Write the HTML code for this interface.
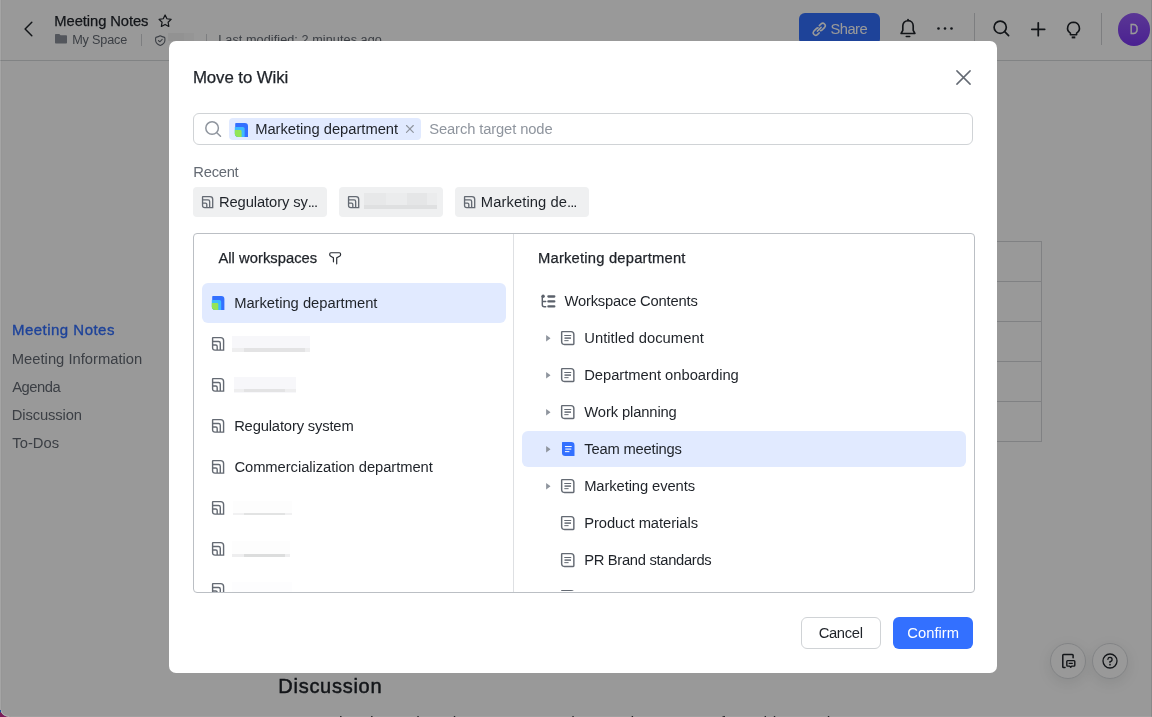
<!DOCTYPE html>
<html lang="en">
<head>
<meta charset="utf-8">
<title>Move to Wiki</title>
<style>
*{box-sizing:border-box;margin:0;padding:0}
html,body{width:1152px;height:717px;overflow:hidden;background:#fff}
body{font-family:"Liberation Sans",sans-serif;font-size:14px;color:#1f2329;position:relative}
.t{position:absolute;white-space:nowrap}
svg{position:absolute;overflow:visible}
#page,#mask,#top,#frame{position:absolute;left:0;top:0;width:1152px;height:717px;overflow:hidden}
#page,#top{will-change:transform}
#page{background:#fff}
#mask{background:rgba(0,0,0,.4)}
#hdrline{position:absolute;left:0;top:60px;width:1152px;height:1px;background:#d8dadd}
.vsep{position:absolute;width:1px;background:#d0d3d6}
#share{position:absolute;left:799px;top:13px;width:81px;height:32px;border-radius:6px;background:#3370ff}
#avatar{position:absolute;left:1117.500px;top:13px;width:32.500px;height:32.500px;border-radius:50%;background:linear-gradient(#975cf8,#7c37f2)}
.tbl{position:absolute;background:#d5d7da}
.fab{position:absolute;width:36px;height:36px;border-radius:50%;background:#fff;border:1px solid #dadcdf;box-shadow:0 4px 14px rgba(31,35,41,.10)}
#modal{position:absolute;left:169px;top:41px;width:828px;height:632px;background:#fff;border-radius:7px}
#search{position:absolute;left:193px;top:113px;width:780px;height:32px;border:1px solid #d0d3d6;border-radius:6px}
#tag{position:absolute;left:229px;top:118px;width:192px;height:22px;border-radius:4px;background:#e1eaff}
.chip{position:absolute;top:187px;height:29.700px;border-radius:4px;background:#eff0f1}
.bl{position:absolute}
.clip{position:absolute;overflow:hidden}
#panel{position:absolute;left:193px;top:233px;width:782px;height:360px;border:1px solid #bbbfc4;border-radius:4px}
#divider{position:absolute;left:319px;top:0;width:1px;height:358px;background:#dee0e3}
.sel{position:absolute;background:#e1eaff;border-radius:6px}
.btn{position:absolute;top:617px;width:80px;height:32px;border-radius:6px}
#b-cancel{left:801px;border:1px solid #d0d3d6;background:#fff}
#b-confirm{left:893px;background:#3370ff}
.edge{position:absolute}
</style>
</head>
<body>
<div id="page">
<svg style="left:22px;top:20px" width="12" height="18" viewBox="0 0 12 18"><path d="M9.800 2.300 L3.100 9 L9.800 15.700" fill="none" stroke="#1f2329" stroke-width="1.500" stroke-linecap="round" stroke-linejoin="round"/></svg>
<div class="t" id="h-title" style="left:54.37px;top:11.14px;font-size:14.75px;line-height:20px;height:20px;letter-spacing:-0.082px;color:#1f2329;-webkit-text-stroke:0.25px #1f2329">Meeting Notes</div>
<svg style="left:157.900px;top:14.400px" width="14.200" height="13.700" viewBox="0 0 13.500 13"><path d="M6.750 .9 L8.500 4.500 L12.500 5.050 L9.600 7.850 L10.300 11.800 L6.750 9.900 L3.200 11.800 L3.900 7.850 L1 5.050 L5 4.500 Z" fill="none" stroke="#1f2329" stroke-width="1.150" stroke-linejoin="round"/></svg>
<svg style="left:55px;top:33.600px" width="12" height="9.600" viewBox="0 0 12 9.600"><path d="M0 .8 Q0 0 .8 0 H4.300 L5.500 1.300 H11.200 Q12 1.300 12 2.100 V8.800 Q12 9.600 11.200 9.600 H.8 Q0 9.600 0 8.800 Z" fill="#8a9099"/></svg>
<div class="t" id="h-space" style="left:72.23px;top:29.87px;font-size:12.65px;line-height:20px;height:20px;letter-spacing:-0.173px;color:#646a73">My Space</div>
<div class="vsep" style="left:141px;top:34px;height:12px"></div>
<svg style="left:155px;top:34.800px" width="10.500" height="11" viewBox="0 0 10.500 11"><path d="M5.250 .75 Q7.300 1.900 8.900 2.100 Q9.900 2.250 9.900 3.250 V5.300 Q9.900 8.800 5.250 10.500 Q.6 8.800 .6 5.300 V3.250 Q.6 2.250 1.600 2.100 Q3.200 1.900 5.250 .75 Z" fill="none" stroke="#646a73" stroke-width="1.100" stroke-linejoin="round"/><path d="M3.400 5.500 L4.800 6.800 L7.200 4.300" fill="none" stroke="#646a73" stroke-width="1.050" stroke-linecap="round" stroke-linejoin="round"/></svg>
<div class="vsep" style="left:206px;top:34px;height:12px"></div>
<div class="t" id="h-mod" style="left:218.19px;top:29.87px;font-size:12.65px;line-height:20px;height:20px;letter-spacing:0.076px;color:#646a73">Last modified: 2 minutes ago</div>
<div id="hdrline"></div>
<div id="share"></div>
<svg style="left:811.300px;top:21px" width="16.500" height="16.500" viewBox="0 0 14.500 14.500"><g fill="none" stroke="#fff" stroke-width="1.350" stroke-linecap="round"><path d="M5.600 8.900 L8.900 5.600"/><path d="M7.300 4.100 L8.900 2.500 A2.200 2.200 0 0 1 12 5.600 L9.800 7.800 A2.200 2.200 0 0 1 8.300 8.450"/><path d="M7.200 10.400 L5.600 12 A2.200 2.200 0 0 1 2.500 8.900 L4.700 6.700 A2.200 2.200 0 0 1 6.200 6.050"/></g></svg>
<div class="t" id="h-share" style="left:830.51px;top:18.89px;font-size:14.75px;line-height:20px;height:20px;letter-spacing:-0.562px;color:#fff">Share</div>
<svg style="left:899px;top:19.300px" width="18" height="19" viewBox="0 0 18 19"><path d="M9 1.700 C5.600 1.700 3.800 4.200 3.800 7 V11.300 L2.100 14.500 H15.900 L14.200 11.300 V7 C14.200 4.200 12.400 1.700 9 1.700 Z" fill="none" stroke="#1f2329" stroke-width="1.650" stroke-linejoin="round"/><path d="M9 .5 V1.500" stroke="#1f2329" stroke-width="1.600" stroke-linecap="round"/><path d="M7.300 17.500 H10.700" stroke="#1f2329" stroke-width="1.650" stroke-linecap="round"/></svg>
<svg style="left:937px;top:26.900px" width="16" height="3" viewBox="0 0 16 3"><circle cx="1.500" cy="1.500" r="1.300" fill="#1f2329"/><circle cx="8" cy="1.500" r="1.300" fill="#1f2329"/><circle cx="14.500" cy="1.500" r="1.300" fill="#1f2329"/></svg>
<div class="vsep" style="left:974px;top:13px;height:32px"></div>
<svg style="left:993.200px;top:20.300px" width="17" height="17" viewBox="0 0 17 17"><circle cx="7.200" cy="7.200" r="6.100" fill="none" stroke="#1f2329" stroke-width="1.700"/><path d="M11.700 11.700 L15.600 15.600" stroke="#1f2329" stroke-width="1.700" stroke-linecap="round"/></svg>
<svg style="left:1031px;top:22px" width="14.500" height="14.500" viewBox="0 0 14.500 14.500"><path d="M7.250 .8 V13.700 M.8 7.250 H13.700" stroke="#1f2329" stroke-width="1.750" stroke-linecap="round"/></svg>
<svg style="left:1066.200px;top:20.500px" width="15" height="18" viewBox="0 0 15 18"><path d="M7.500 1.200 A5.900 5.900 0 0 1 10.600 12.100 V13.700 H4.400 V12.100 A5.900 5.900 0 0 1 7.500 1.200 Z" fill="none" stroke="#1f2329" stroke-width="1.600" stroke-linejoin="round"/><path d="M5.700 16.400 H9.300" stroke="#1f2329" stroke-width="2" stroke-linecap="butt"/></svg>
<div class="vsep" style="left:1101px;top:13px;height:32px"></div>
<div id="avatar"></div>
<div class="t" id="h-av" style="left:1128.600px;top:18.600px;font-size:14px;line-height:20px;color:#fff;-webkit-text-stroke:.3px #fff;transform:scaleX(.84);transform-origin:50% 50%">D</div>
<div class="t" id="n0" style="left:11.91px;top:320.30px;font-size:15.0px;line-height:20px;height:20px;letter-spacing:0.485px;color:#3370ff;-webkit-text-stroke:.35px #3370ff">Meeting Notes</div>
<div class="t" id="n1" style="left:11.82px;top:348.89px;font-size:14.75px;line-height:20px;height:20px;letter-spacing:0.001px;color:#646a73">Meeting Information</div>
<div class="t" id="n2" style="left:12.28px;top:376.89px;font-size:14.75px;line-height:20px;height:20px;letter-spacing:-0.502px;color:#646a73">Agenda</div>
<div class="t" id="n3" style="left:11.82px;top:404.89px;font-size:14.75px;line-height:20px;height:20px;letter-spacing:-0.119px;color:#646a73">Discussion</div>
<div class="t" id="n4" style="left:12.28px;top:433.29px;font-size:14.75px;line-height:20px;height:20px;letter-spacing:0.035px;color:#646a73">To-Dos</div>
<div class="tbl" style="left:900px;top:241px;width:142px;height:1px"></div>
<div class="tbl" style="left:900px;top:281px;width:142px;height:1px"></div>
<div class="tbl" style="left:900px;top:321px;width:142px;height:1px"></div>
<div class="tbl" style="left:900px;top:361px;width:142px;height:1px"></div>
<div class="tbl" style="left:900px;top:401px;width:142px;height:1px"></div>
<div class="tbl" style="left:900px;top:441px;width:142px;height:1px"></div>
<div class="tbl" style="left:1041px;top:241px;width:1px;height:201px"></div>
<div class="t" id="p-disc" style="left:278.37px;top:672.07px;font-size:20px;line-height:28px;height:28px;letter-spacing:0.718px;color:#1f2329;-webkit-text-stroke:0.5px #1f2329">Discussion</div>
<div class="t" id="p-body" style="left:279px;top:710.500px;font-size:16px;line-height:24px;height:24px;letter-spacing:.35px;color:#1f2329">summarize the main points, open questions and next steps from this meeting</div>
<div class="fab" style="left:1050px;top:643px"></div>
<div class="fab" style="left:1092.200px;top:643px"></div>
<svg style="left:1061px;top:653px" width="15" height="17" viewBox="0 0 15 17"><g fill="none" stroke="#1f2329" stroke-linejoin="round" stroke-linecap="round"><path d="M4 14.500 H2.600 Q1.800 14.500 1.800 13.700 V2.300 Q1.800 1.500 2.600 1.500 H11.300 Q12.100 1.500 12.100 2.300 V4.800" stroke-width="1.500"/><path d="M6.600 7.600 H13 Q13.800 7.600 13.800 8.400 V12.300 Q13.800 13.100 13 13.100 H10.700 L9.700 14.300 L8.700 13.100 H6.600 Q5.800 13.100 5.800 12.300 V8.400 Q5.800 7.600 6.600 7.600 Z" stroke-width="1.400"/><path d="M8.200 10.350 H11.300" stroke-width="1.400"/></g></svg>
<svg style="left:1102px;top:653px" width="16" height="16" viewBox="0 0 16 16"><circle cx="8" cy="8" r="7" fill="none" stroke="#1f2329" stroke-width="1.300"/><path d="M5.900 6.300 A2.100 2.100 0 1 1 8 8.600 V9.600" fill="none" stroke="#1f2329" stroke-width="1.300" stroke-linecap="round"/><circle cx="8" cy="11.700" r=".85" fill="#1f2329"/></svg>
</div>
<div id="mask"></div>
<div id="post">
<div class="bl" style="left:168px;top:33.300px;width:26px;height:7.700px;background:#959595"></div>
<div class="bl" style="left:168px;top:33.300px;width:15.500px;height:7.700px;background:#929292"></div>
</div>
<div id="top">
<div id="modal"></div>
<div class="t" id="m-title" style="left:192.89px;top:67.76px;font-size:16.85px;line-height:20px;height:20px;letter-spacing:-0.083px;color:#1f2329;-webkit-text-stroke:0.25px #1f2329">Move to Wiki</div>
<svg style="left:955.600px;top:69.500px" width="15" height="15" viewBox="0 0 15 15"><path d="M.9 .9 L14.100 14.100 M14.100 .9 L.9 14.100" stroke="#646a73" stroke-width="1.500" stroke-linecap="round"/></svg>
<div id="search"></div>
<svg style="left:205px;top:121px" width="17" height="16" viewBox="0 0 17 16"><circle cx="7.100" cy="7.050" r="6.300" fill="none" stroke="#8f959e" stroke-width="1.500"/><path d="M11.800 11.700 L15.500 15.200" stroke="#8f959e" stroke-width="1.500" stroke-linecap="round"/></svg>
<div id="tag"></div>
<svg style="left:234.6px;top:123px" width="13" height="14" viewBox="0 0 12.2 13.9" preserveAspectRatio="none"><path d="M.9 0 H9.200 A3 3 0 0 1 12.200 3 V13.900 H3.400 A3.200 3.200 0 0 1 .2 10.700 V.7 A.7 .7 0 0 1 .9 0 Z" fill="#3370ff"/><path d="M-.2 4 H7.400 A1.650 1.650 0 0 1 9.050 5.650 V13.900 H3.200 A3.400 3.400 0 0 1 -.2 10.500 Z" fill="#3ebaff"/><path d="M-.2 7.050 H5 A1.200 1.200 0 0 1 6.200 8.250 V13.900 H3.200 A3.400 3.400 0 0 1 -.2 10.500 Z" fill="#93e556"/></svg>
<div class="t" id="m-tag" style="left:255.13px;top:118.89px;font-size:14.75px;line-height:20px;height:20px;letter-spacing:-0.026px;color:#1f2329">Marketing department</div>
<svg style="left:406.100px;top:124.900px" width="7.800" height="7.800" viewBox="0 0 7.800 7.800"><path d="M.5 .5 L7.300 7.300 M7.300 .5 L.5 7.300" stroke="#8f959e" stroke-width="1.150" stroke-linecap="round"/></svg>
<div class="t" id="m-ph" style="left:429.25px;top:118.89px;font-size:14.75px;line-height:20px;height:20px;letter-spacing:-0.125px;color:#8f959e">Search target node</div>
<div class="t" id="m-recent" style="left:193.33px;top:162.39px;font-size:14.75px;line-height:20px;height:20px;letter-spacing:-0.279px;color:#646a73">Recent</div>
<div class="chip" style="left:193px;width:134px"></div>
<div class="chip" style="left:339px;width:104px"></div>
<div class="chip" style="left:455px;width:134px"></div>
<svg style="left:202.3px;top:195.9px" width="11.25" height="12.1" viewBox="0 0 12.2 13.75" preserveAspectRatio="none"><g fill="none" stroke="#646a73" stroke-width="1.44"><path d="M1 .6 H8.600 Q11.600 .6 11.600 3.600 V13.150 H3 Q.6 13.150 .6 10.750 V1 Q.6 .6 1 .6 Z"/><path d="M.6 4.500 H6.600 Q8.300 4.500 8.300 6.200 V13.100"/><path d="M.6 8 H3.800 Q5.200 8 5.200 9.400 V13.100"/></g></svg>
<svg style="left:348.3px;top:195.9px" width="11.25" height="12.1" viewBox="0 0 12.2 13.75" preserveAspectRatio="none"><g fill="none" stroke="#646a73" stroke-width="1.44"><path d="M1 .6 H8.600 Q11.600 .6 11.600 3.600 V13.150 H3 Q.6 13.150 .6 10.750 V1 Q.6 .6 1 .6 Z"/><path d="M.6 4.500 H6.600 Q8.300 4.500 8.300 6.200 V13.100"/><path d="M.6 8 H3.800 Q5.200 8 5.200 9.400 V13.100"/></g></svg>
<svg style="left:464.3px;top:195.9px" width="11.25" height="12.1" viewBox="0 0 12.2 13.75" preserveAspectRatio="none"><g fill="none" stroke="#646a73" stroke-width="1.44"><path d="M1 .6 H8.600 Q11.600 .6 11.600 3.600 V13.150 H3 Q.6 13.150 .6 10.750 V1 Q.6 .6 1 .6 Z"/><path d="M.6 4.500 H6.600 Q8.300 4.500 8.300 6.200 V13.100"/><path d="M.6 8 H3.800 Q5.200 8 5.200 9.400 V13.100"/></g></svg>
<div class="t" id="c1" style="left:218.99px;top:191.89px;font-size:14.75px;line-height:20px;height:20px;letter-spacing:-0.108px;color:#1f2329">Regulatory sy<span style="letter-spacing:-1px">...</span></div>
<div class="t" id="c3" style="left:480.85px;top:191.89px;font-size:14.75px;line-height:20px;height:20px;letter-spacing:0.081px;color:#1f2329">Marketing de<span style="letter-spacing:-1px">...</span></div>
<div class="bl" style="left:363.500px;top:193px;width:73.500px;height:15.800px;background:#ebeced"></div>
<div class="bl" style="left:363.500px;top:193px;width:22px;height:15.800px;background:#e7e8e9"></div>
<div class="bl" style="left:407px;top:193px;width:20px;height:15.800px;background:#e5e6e7"></div>
<div class="bl" style="left:363.500px;top:205.300px;width:73.500px;height:3.500px;background:#dfe0e1"></div>
<div id="panel"><div id="divider"></div></div>
<div class="sel" style="left:202px;top:283px;width:304px;height:39.600px"></div>
<div class="sel" style="left:522px;top:431.200px;width:444px;height:35.800px"></div>
<div class="t" id="l-head" style="left:218.41px;top:247.89px;font-size:14.75px;line-height:20px;height:20px;letter-spacing:0.031px;color:#1f2329;-webkit-text-stroke:0.25px #1f2329">All workspaces</div>
<svg style="left:329px;top:251.800px" width="12.500" height="12.500" viewBox="0 0 12.500 12.500"><path d="M4.450 9.800 V6.300 Q4.450 5.700 3.900 5.400 L1.400 3.900 Q.75 3.500 .75 2.750 V1.900 Q.75 .75 1.900 .75 H10.400 Q11.550 .75 11.550 1.900 V2.750 Q11.550 3.500 10.900 3.900 L8.300 5.400 Q7.700 5.700 7.700 6.300 V11.800" fill="none" stroke="#2b2f36" stroke-width="1.200" stroke-linecap="round" stroke-linejoin="round"/></svg>
<svg style="left:211.5px;top:296px" width="12.4" height="14" viewBox="0 0 12.2 13.9" preserveAspectRatio="none"><path d="M.9 0 H9.200 A3 3 0 0 1 12.200 3 V13.900 H3.400 A3.200 3.200 0 0 1 .2 10.700 V.7 A.7 .7 0 0 1 .9 0 Z" fill="#3370ff"/><path d="M-.2 4 H7.400 A1.650 1.650 0 0 1 9.050 5.650 V13.900 H3.200 A3.400 3.400 0 0 1 -.2 10.500 Z" fill="#3ebaff"/><path d="M-.2 7.050 H5 A1.200 1.200 0 0 1 6.200 8.250 V13.900 H3.200 A3.400 3.400 0 0 1 -.2 10.500 Z" fill="#93e556"/></svg>
<div class="t" id="l0" style="left:234.13px;top:292.89px;font-size:14.75px;line-height:20px;height:20px;letter-spacing:-0.008px;color:#1f2329">Marketing department</div>
<svg style="left:211.86px;top:337px" width="12.2" height="13.75" viewBox="0 0 12.2 13.75" preserveAspectRatio="none"><g fill="none" stroke="#646a73" stroke-width="1.40"><path d="M1 .6 H8.600 Q11.600 .6 11.600 3.600 V13.150 H3 Q.6 13.150 .6 10.750 V1 Q.6 .6 1 .6 Z"/><path d="M.6 4.500 H6.600 Q8.300 4.500 8.300 6.200 V13.100"/><path d="M.6 8 H3.800 Q5.200 8 5.200 9.400 V13.100"/></g></svg>
<svg style="left:211.86px;top:378px" width="12.2" height="13.75" viewBox="0 0 12.2 13.75" preserveAspectRatio="none"><g fill="none" stroke="#646a73" stroke-width="1.40"><path d="M1 .6 H8.600 Q11.600 .6 11.600 3.600 V13.150 H3 Q.6 13.150 .6 10.750 V1 Q.6 .6 1 .6 Z"/><path d="M.6 4.500 H6.600 Q8.300 4.500 8.300 6.200 V13.100"/><path d="M.6 8 H3.800 Q5.200 8 5.200 9.400 V13.100"/></g></svg>
<svg style="left:211.86px;top:419px" width="12.2" height="13.75" viewBox="0 0 12.2 13.75" preserveAspectRatio="none"><g fill="none" stroke="#646a73" stroke-width="1.40"><path d="M1 .6 H8.600 Q11.600 .6 11.600 3.600 V13.150 H3 Q.6 13.150 .6 10.750 V1 Q.6 .6 1 .6 Z"/><path d="M.6 4.500 H6.600 Q8.300 4.500 8.300 6.200 V13.100"/><path d="M.6 8 H3.800 Q5.200 8 5.200 9.400 V13.100"/></g></svg>
<svg style="left:211.86px;top:460px" width="12.2" height="13.75" viewBox="0 0 12.2 13.75" preserveAspectRatio="none"><g fill="none" stroke="#646a73" stroke-width="1.40"><path d="M1 .6 H8.600 Q11.600 .6 11.600 3.600 V13.150 H3 Q.6 13.150 .6 10.750 V1 Q.6 .6 1 .6 Z"/><path d="M.6 4.500 H6.600 Q8.300 4.500 8.300 6.200 V13.100"/><path d="M.6 8 H3.800 Q5.200 8 5.200 9.400 V13.100"/></g></svg>
<svg style="left:211.86px;top:501px" width="12.2" height="13.75" viewBox="0 0 12.2 13.75" preserveAspectRatio="none"><g fill="none" stroke="#646a73" stroke-width="1.40"><path d="M1 .6 H8.600 Q11.600 .6 11.600 3.600 V13.150 H3 Q.6 13.150 .6 10.750 V1 Q.6 .6 1 .6 Z"/><path d="M.6 4.500 H6.600 Q8.300 4.500 8.300 6.200 V13.100"/><path d="M.6 8 H3.800 Q5.200 8 5.200 9.400 V13.100"/></g></svg>
<svg style="left:211.86px;top:542px" width="12.2" height="13.75" viewBox="0 0 12.2 13.75" preserveAspectRatio="none"><g fill="none" stroke="#646a73" stroke-width="1.40"><path d="M1 .6 H8.600 Q11.600 .6 11.600 3.600 V13.150 H3 Q.6 13.150 .6 10.750 V1 Q.6 .6 1 .6 Z"/><path d="M.6 4.500 H6.600 Q8.300 4.500 8.300 6.200 V13.100"/><path d="M.6 8 H3.800 Q5.200 8 5.200 9.400 V13.100"/></g></svg>
<div class="t" id="l3" style="left:234.13px;top:415.89px;font-size:14.75px;line-height:20px;height:20px;letter-spacing:-0.161px;color:#1f2329">Regulatory system</div>
<div class="t" id="l4" style="left:234.42px;top:456.89px;font-size:14.75px;line-height:20px;height:20px;letter-spacing:-0.059px;color:#1f2329">Commercialization department</div>
<div class="bl" style="left:232px;top:336.3px;width:78px;height:15.7px;background:#f7f7fa"></div><div class="bl" style="left:232px;top:348.40px;width:78px;height:3.6px;background:#eeeeef"></div><div class="bl" style="left:243.7px;top:348.40px;width:61px;height:3.6px;background:#e3e3e4"></div>
<div class="bl" style="left:234px;top:377px;width:61.7px;height:15.5px;background:#f7f7fa"></div><div class="bl" style="left:234px;top:388.90px;width:61.7px;height:3.6px;background:#eeeeef"></div><div class="bl" style="left:244px;top:388.90px;width:41px;height:3.6px;background:#e3e3e4"></div>
<div class="bl" style="left:233px;top:500.5px;width:58.7px;height:14.6px;background:#fdfdfd"></div><div class="bl" style="left:233px;top:512.70px;width:58.7px;height:2.4px;background:#f1f1f2"></div><div class="bl" style="left:243.5px;top:512.70px;width:41px;height:2.4px;background:#e2e3e3"></div>
<div class="bl" style="left:232px;top:541px;width:58px;height:16px;background:#fdfdfd"></div><div class="bl" style="left:232px;top:554.00px;width:58px;height:3px;background:#eeeeef"></div><div class="bl" style="left:243.5px;top:554.00px;width:41px;height:3px;background:#dcdddd"></div>
<div class="clip" style="left:200px;top:575px;width:300px;height:17.200px"><div class="bl" style="left:32px;top:7px;width:60px;height:14px;background:#fdfdfe"></div><div class="bl" style="left:32px;top:17.40px;width:60px;height:3.6px;background:#fafafa"></div><div class="bl" style="left:43px;top:17.40px;width:42px;height:3.6px;background:#f6f6f6"></div><svg style="left:11.86px;top:8px" width="12.2" height="13.75" viewBox="0 0 12.2 13.75" preserveAspectRatio="none"><g fill="none" stroke="#646a73" stroke-width="1.40"><path d="M1 .6 H8.600 Q11.600 .6 11.600 3.600 V13.150 H3 Q.6 13.150 .6 10.750 V1 Q.6 .6 1 .6 Z"/><path d="M.6 4.500 H6.600 Q8.300 4.500 8.300 6.200 V13.100"/><path d="M.6 8 H3.800 Q5.200 8 5.200 9.400 V13.100"/></g></svg></div>
<div class="t" id="r-head" style="left:537.99px;top:247.89px;font-size:14.75px;line-height:20px;height:20px;letter-spacing:0.210px;color:#1f2329;-webkit-text-stroke:0.25px #1f2329">Marketing department</div>
<svg style="left:540.900px;top:294.200px" width="15" height="14.500" viewBox="0 0 15 14.500"><g fill="none" stroke="#5b616b" stroke-linecap="round"><circle cx="2.100" cy="2.200" r="1.700" fill="#5b616b" stroke="none"/><path d="M1.300 2.500 V10.800 Q1.300 12.700 3.200 12.700 H4.700 M1.300 7.500 H4.700" stroke-width="1.450"/><path d="M7.400 2.500 H13.300 M7.400 7.450 H13.300 M7.400 12.400 H13.300" stroke-width="2.300"/></g></svg>
<div class="t" id="r0" style="left:564.52px;top:291.14px;font-size:14.75px;line-height:20px;height:20px;letter-spacing:-0.200px;color:#1f2329">Workspace Contents</div>
<svg style="left:546px;top:334.7px" width="4.500" height="6.600" viewBox="0 0 4.500 6.600"><path d="M.1 .4 Q.1 0 .5 .25 L4.200 3 Q4.500 3.300 4.200 3.600 L.5 6.350 Q.1 6.600 .1 6.200 Z" fill="#8f959e"/></svg>
<svg style="left:561.2px;top:330.9px" width="13.5" height="14.1" viewBox="0 0 13.5 14.1"><path d="M1.200 .65 H10 Q12.850 .65 12.850 3.500 V12.850 Q12.850 13.450 12.250 13.450 H3.500 Q.65 13.450 .65 10.600 V1.200 Q.65 .65 1.200 .65 Z" fill="none" stroke="#646a73" stroke-width="1.450"/><path d="M3.700 4.550 H9.800" stroke="#646a73" stroke-width="1.100" stroke-linecap="round"/><path d="M3.500 7.100 H10" stroke="#646a73" stroke-width="1.500"/><path d="M3.700 9.650 H7.200" stroke="#646a73" stroke-width="1" stroke-linecap="round"/></svg>
<div class="t" id="r1" style="left:584.24px;top:327.89px;font-size:14.75px;line-height:20px;height:20px;letter-spacing:0.038px;color:#1f2329">Untitled document</div>
<svg style="left:546px;top:371.7px" width="4.500" height="6.600" viewBox="0 0 4.500 6.600"><path d="M.1 .4 Q.1 0 .5 .25 L4.200 3 Q4.500 3.300 4.200 3.600 L.5 6.350 Q.1 6.600 .1 6.200 Z" fill="#8f959e"/></svg>
<svg style="left:561.2px;top:367.9px" width="13.5" height="14.1" viewBox="0 0 13.5 14.1"><path d="M1.200 .65 H10 Q12.850 .65 12.850 3.500 V12.850 Q12.850 13.450 12.250 13.450 H3.500 Q.65 13.450 .65 10.600 V1.200 Q.65 .65 1.200 .65 Z" fill="none" stroke="#646a73" stroke-width="1.450"/><path d="M3.700 4.550 H9.800" stroke="#646a73" stroke-width="1.100" stroke-linecap="round"/><path d="M3.500 7.100 H10" stroke="#646a73" stroke-width="1.500"/><path d="M3.700 9.650 H7.200" stroke="#646a73" stroke-width="1" stroke-linecap="round"/></svg>
<div class="t" id="r2" style="left:584.13px;top:364.89px;font-size:14.75px;line-height:20px;height:20px;letter-spacing:-0.015px;color:#1f2329">Department onboarding</div>
<svg style="left:546px;top:408.7px" width="4.500" height="6.600" viewBox="0 0 4.500 6.600"><path d="M.1 .4 Q.1 0 .5 .25 L4.200 3 Q4.500 3.300 4.200 3.600 L.5 6.350 Q.1 6.600 .1 6.200 Z" fill="#8f959e"/></svg>
<svg style="left:561.2px;top:404.9px" width="13.5" height="14.1" viewBox="0 0 13.5 14.1"><path d="M1.200 .65 H10 Q12.850 .65 12.850 3.500 V12.850 Q12.850 13.450 12.250 13.450 H3.500 Q.65 13.450 .65 10.600 V1.200 Q.65 .65 1.200 .65 Z" fill="none" stroke="#646a73" stroke-width="1.450"/><path d="M3.700 4.550 H9.800" stroke="#646a73" stroke-width="1.100" stroke-linecap="round"/><path d="M3.500 7.100 H10" stroke="#646a73" stroke-width="1.500"/><path d="M3.700 9.650 H7.200" stroke="#646a73" stroke-width="1" stroke-linecap="round"/></svg>
<div class="t" id="r3" style="left:584.35px;top:401.89px;font-size:14.75px;line-height:20px;height:20px;letter-spacing:-0.128px;color:#1f2329">Work planning</div>
<svg style="left:546px;top:445.7px" width="4.500" height="6.600" viewBox="0 0 4.500 6.600"><path d="M.1 .4 Q.1 0 .5 .25 L4.200 3 Q4.500 3.300 4.200 3.600 L.5 6.350 Q.1 6.600 .1 6.200 Z" fill="#8f959e"/></svg>
<svg style="left:561.6px;top:442.0px" width="12.5" height="14" viewBox="0 0 12.5 14"><path d="M.5 0 H9.300 Q12.500 0 12.500 3.200 V13.500 Q12.500 14 12 14 H3.200 Q0 14 0 10.800 V.5 Q0 0 .5 0 Z" fill="#3370ff"/><path d="M3.300 4.550 H9.300" stroke="#fff" stroke-width="1" stroke-linecap="round"/><path d="M3.300 7.100 H9.300" stroke="#c2d4ff" stroke-width="1.500"/><path d="M3.300 9.650 H7" stroke="#fff" stroke-width="1" stroke-linecap="round"/></svg>
<div class="t" id="r4" style="left:584.35px;top:438.89px;font-size:14.75px;line-height:20px;height:20px;letter-spacing:-0.209px;color:#1f2329">Team meetings</div>
<svg style="left:546px;top:482.7px" width="4.500" height="6.600" viewBox="0 0 4.500 6.600"><path d="M.1 .4 Q.1 0 .5 .25 L4.200 3 Q4.500 3.300 4.200 3.600 L.5 6.350 Q.1 6.600 .1 6.200 Z" fill="#8f959e"/></svg>
<svg style="left:561.2px;top:478.9px" width="13.5" height="14.1" viewBox="0 0 13.5 14.1"><path d="M1.200 .65 H10 Q12.850 .65 12.850 3.500 V12.850 Q12.850 13.450 12.250 13.450 H3.500 Q.65 13.450 .65 10.600 V1.200 Q.65 .65 1.200 .65 Z" fill="none" stroke="#646a73" stroke-width="1.450"/><path d="M3.700 4.550 H9.800" stroke="#646a73" stroke-width="1.100" stroke-linecap="round"/><path d="M3.500 7.100 H10" stroke="#646a73" stroke-width="1.500"/><path d="M3.700 9.650 H7.200" stroke="#646a73" stroke-width="1" stroke-linecap="round"/></svg>
<div class="t" id="r5" style="left:584.13px;top:475.89px;font-size:14.75px;line-height:20px;height:20px;letter-spacing:-0.095px;color:#1f2329">Marketing events</div>
<svg style="left:561.2px;top:515.9px" width="13.5" height="14.1" viewBox="0 0 13.5 14.1"><path d="M1.200 .65 H10 Q12.850 .65 12.850 3.500 V12.850 Q12.850 13.450 12.250 13.450 H3.500 Q.65 13.450 .65 10.600 V1.200 Q.65 .65 1.200 .65 Z" fill="none" stroke="#646a73" stroke-width="1.450"/><path d="M3.700 4.550 H9.800" stroke="#646a73" stroke-width="1.100" stroke-linecap="round"/><path d="M3.500 7.100 H10" stroke="#646a73" stroke-width="1.500"/><path d="M3.700 9.650 H7.200" stroke="#646a73" stroke-width="1" stroke-linecap="round"/></svg>
<div class="t" id="r6" style="left:584.13px;top:512.89px;font-size:14.75px;line-height:20px;height:20px;letter-spacing:-0.053px;color:#1f2329">Product materials</div>
<svg style="left:561.2px;top:552.9px" width="13.5" height="14.1" viewBox="0 0 13.5 14.1"><path d="M1.200 .65 H10 Q12.850 .65 12.850 3.500 V12.850 Q12.850 13.450 12.250 13.450 H3.500 Q.65 13.450 .65 10.600 V1.200 Q.65 .65 1.200 .65 Z" fill="none" stroke="#646a73" stroke-width="1.450"/><path d="M3.700 4.550 H9.800" stroke="#646a73" stroke-width="1.100" stroke-linecap="round"/><path d="M3.500 7.100 H10" stroke="#646a73" stroke-width="1.500"/><path d="M3.700 9.650 H7.200" stroke="#646a73" stroke-width="1" stroke-linecap="round"/></svg>
<div class="t" id="r7" style="left:584.13px;top:549.89px;font-size:14.75px;line-height:20px;height:20px;letter-spacing:-0.308px;color:#1f2329">PR Brand standards</div>
<div class="clip" style="left:560px;top:585px;width:20px;height:6.200px"><svg style="left:1.2px;top:4.8px" width="13.5" height="14.1" viewBox="0 0 13.5 14.1"><path d="M1.200 .65 H10 Q12.850 .65 12.850 3.500 V12.850 Q12.850 13.450 12.250 13.450 H3.500 Q.65 13.450 .65 10.600 V1.200 Q.65 .65 1.200 .65 Z" fill="none" stroke="#646a73" stroke-width="1.450"/><path d="M3.700 4.550 H9.800" stroke="#646a73" stroke-width="1.100" stroke-linecap="round"/><path d="M3.500 7.100 H10" stroke="#646a73" stroke-width="1.500"/><path d="M3.700 9.650 H7.200" stroke="#646a73" stroke-width="1" stroke-linecap="round"/></svg></div>
<div class="btn" id="b-cancel"></div>
<div class="btn" id="b-confirm"></div>
<div class="t" id="cancel" style="left:818.67px;top:622.59px;font-size:14.75px;line-height:20px;height:20px;letter-spacing:-0.321px;color:#1f2329">Cancel</div>
<div class="t" id="confirm" style="left:907.20px;top:622.59px;font-size:14.75px;line-height:20px;height:20px;letter-spacing:0.050px;color:#fff">Confirm</div>
</div>
<div id="frame">
<div class="edge" style="left:0;top:0;width:1px;height:717px;background:rgba(255,255,255,.12)"></div>
<div class="edge" style="left:1px;top:0;width:1px;height:717px;background:rgba(0,0,0,.02)"></div>
<div class="edge" style="left:1151px;top:0;width:1px;height:717px;background:rgba(0,0,0,.1)"></div>
<div class="edge" style="left:0;top:716px;width:1152px;height:1px;background:rgba(255,255,255,.07)"></div>
<svg style="left:0;top:707px" width="12" height="10" viewBox="0 0 12 10"><path d="M0 2 Q.6 9.300 10.500 10 L0 10 Z" fill="#7a1c58"/><path d="M.7 2.500 Q1.500 8.800 9.500 9.600" fill="none" stroke="#b4b4b4" stroke-width="1"/><rect x="0" y="3" width="1" height="2.200" fill="#1c4f9c"/></svg>
</div>
</body>
</html>
